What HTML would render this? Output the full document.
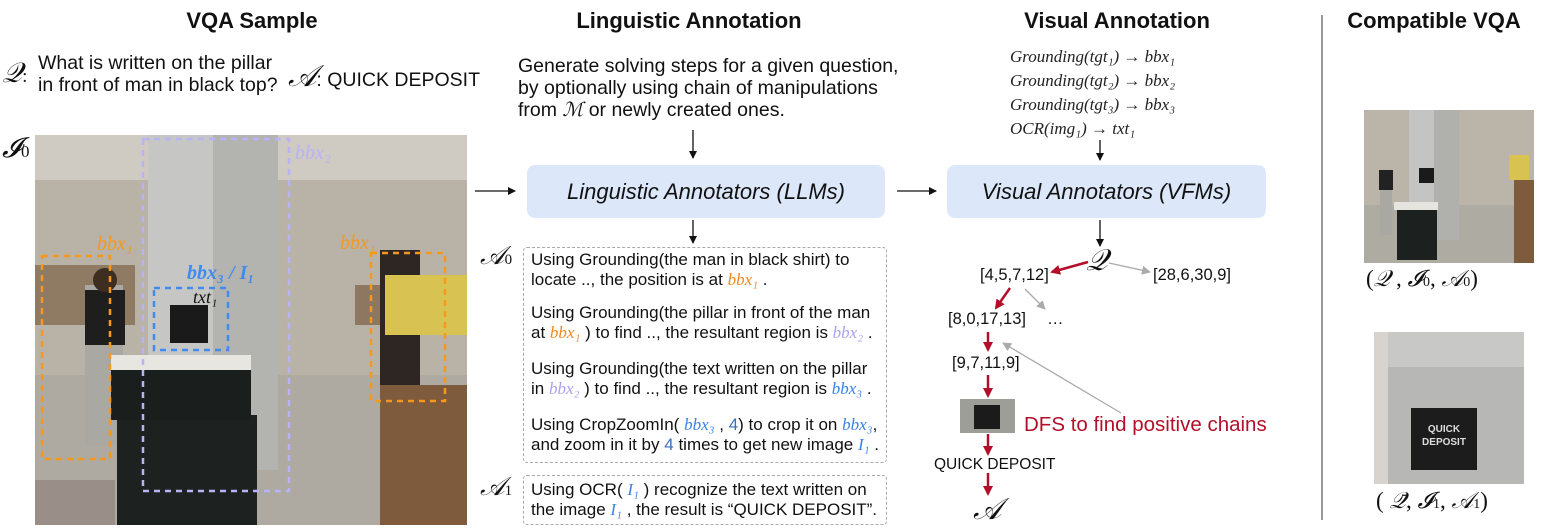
<!DOCTYPE html>
<html><head><meta charset="utf-8"><style>
*{margin:0;padding:0;box-sizing:border-box}
body{width:1544px;height:529px;background:#fff;position:relative;overflow:hidden;font-family:"Liberation Sans",sans-serif;color:#111}
.a{position:absolute;white-space:nowrap}
.t{font-weight:bold;font-size:22px;width:300px;text-align:center;top:8px}
.m{font-family:"Liberation Serif",serif;font-style:italic}
.o{color:#f08a1e}.p{color:#a9a2f0}.b{color:#3b82e6}
.box{position:absolute;background:#dce8fa;border-radius:8px;font-style:italic;font-size:22px;display:flex;align-items:center;justify-content:center}
.dash{position:absolute;border:1px dashed #aaa;border-radius:4px}
.l{font-size:17px;line-height:20px}
.n{font-size:16.5px}
</style></head><body>
<div class="a t" style="left:102px">VQA Sample</div>
<div class="a t" style="left:539px">Linguistic Annotation</div>
<div class="a t" style="left:967px">Visual Annotation</div>
<div class="a t" style="left:1284px">Compatible VQA</div>
<div class="a" style="left:1321px;top:15px;width:2px;height:505px;background:#999"></div>

<div class="a m" style="left:2px;top:58px;font-size:28px">𝒬<span style="font-style:normal;font-size:19px">:</span></div>
<div class="a" style="left:38px;top:52px;font-size:19.5px;line-height:22px">What is written on the pillar<br>in front of man in black top?</div>
<div class="a m" style="left:288px;top:60px;font-size:30px">𝒜<span style="font-style:normal;font-size:19.5px;font-family:'Liberation Sans'">: QUICK DEPOSIT</span></div>
<div class="a m" style="left:2px;top:133px;font-size:28px">𝓘<span style="font-size:17px;font-style:normal">0</span></div>

<svg class="a" style="left:35px;top:135px" width="432" height="390" viewBox="0 0 432 390">
<rect width="432" height="390" fill="#b9b2a6"/>
<rect y="0" width="432" height="45" fill="#cfcac2"/>
<rect y="240" width="432" height="150" fill="#aeaaa2"/>
<rect x="113" y="0" width="130" height="335" fill="#c6c6c4"/>
<rect x="178" y="0" width="65" height="335" fill="#b3b3b0"/>
<rect x="0" y="130" width="100" height="60" fill="#8f7a64"/>
<rect x="320" y="150" width="60" height="40" fill="#8e7760"/>
<rect x="50" y="150" width="38" height="160" fill="#aaa8a2"/>
<rect x="50" y="155" width="40" height="55" fill="#1e1e1e"/>
<circle cx="70" cy="145" r="12" fill="#3e2e22"/>
<rect x="82" y="280" width="140" height="110" fill="#1d211f"/>
<rect x="76" y="225" width="140" height="60" fill="#1a1e1c"/>
<rect x="76" y="220" width="140" height="15" fill="#e8e6e0"/>
<rect x="135" y="170" width="38" height="38" fill="#1a1a1a"/>
<rect x="345" y="115" width="40" height="150" fill="#2d2622"/>
<rect x="350" y="140" width="82" height="60" fill="#d8c252"/>
<rect x="345" y="250" width="87" height="140" fill="#7e5b3c"/>
<rect x="0" y="345" width="80" height="45" fill="#9a8f88"/>
<g fill="none" stroke-dasharray="6 5" stroke-width="2.5">
<rect x="7" y="121" width="68" height="203" stroke="#f6981e"/>
<rect x="336" y="118" width="74" height="148" stroke="#f6981e"/>
<rect x="108" y="4" width="146" height="352" stroke="#b8b2f6"/>
<rect x="119" y="153" width="74" height="62" stroke="#3f8bf0"/>
</g>
<text x="62" y="115" font-family="Liberation Serif" font-style="italic" font-size="20" fill="#f6981e">bbx₁</text>
<text x="305" y="114" font-family="Liberation Serif" font-style="italic" font-size="20" fill="#f6981e">bbx₁</text>
<text x="260" y="24" font-family="Liberation Serif" font-style="italic" font-size="20" fill="#b8b2f6">bbx₂</text>
<text x="152" y="144" font-family="Liberation Serif" font-style="italic" font-weight="bold" font-size="20" fill="#3f8bf0">bbx₃ / I₁</text>
<text x="158" y="168" font-family="Liberation Serif" font-style="italic" font-size="18" fill="#111">txt₁</text>
</svg>

<div class="a" style="left:518px;top:55px;font-size:19.5px;line-height:22px">Generate solving steps for a given question,<br>by optionally using chain of manipulations<br>from <span class="m">ℳ</span> or newly created ones.</div>
<div class="box" style="left:527px;top:165px;width:358px;height:53px">Linguistic Annotators (LLMs)</div>
<div class="box" style="left:947px;top:165px;width:319px;height:53px">Visual Annotators (VFMs)</div>
<div class="a m" style="left:1010px;top:45px;font-size:17px;line-height:24px;color:#222">Grounding(tgt₁) → bbx₁<br>Grounding(tgt₂) → bbx₂<br>Grounding(tgt₃) → bbx₃<br>OCR(img₁) → txt₁</div>

<div class="a m" style="left:480px;top:241px;font-size:26px">𝒜<span style="font-size:15px;font-style:normal">0</span></div>
<div class="a m" style="left:480px;top:472px;font-size:26px">𝒜<span style="font-size:15px;font-style:normal">1</span></div>
<div class="dash" style="left:523px;top:247px;width:364px;height:216px"></div>
<div class="dash" style="left:523px;top:475px;width:364px;height:50px"></div>
<div class="a l" style="left:531px;top:250px">Using Grounding(the man in black shirt) to<br>locate .., the position is at <span class="m o">bbx₁</span> .</div>
<div class="a l" style="left:531px;top:303px">Using Grounding(the pillar in front of the man<br>at <span class="m o">bbx₁</span> ) to find .., the resultant region is <span class="m p">bbx₂</span> .</div>
<div class="a l" style="left:531px;top:359px">Using Grounding(the text written on the pillar<br>in <span class="m p">bbx₂</span> ) to find .., the resultant region is <span class="m b">bbx₃</span> .</div>
<div class="a l" style="left:531px;top:415px">Using CropZoomIn( <span class="m b">bbx₃</span> , <span style="color:#3a6fb0">4</span>) to crop it on <span class="m b">bbx₃</span>,<br>and zoom in it by <span style="color:#3a6fb0">4</span> times to get new image <span class="m b">I₁</span> .</div>
<div class="a l" style="left:531px;top:480px">Using OCR( <span class="m b">I₁</span> )  recognize the text written on<br>the image <span class="m b">I₁</span> , the result is  “QUICK DEPOSIT”.</div>

<div class="a m" style="left:1086px;top:244px;font-size:30px">𝒬</div>
<div class="a n" style="left:980px;top:266px">[4,5,7,12]</div>
<div class="a n" style="left:1153px;top:266px">[28,6,30,9]</div>
<div class="a n" style="left:948px;top:310px">[8,0,17,13]</div>
<div class="a n" style="left:1047px;top:310px">…</div>
<div class="a n" style="left:952px;top:354px">[9,7,11,9]</div>
<svg class="a" style="left:960px;top:399px" width="55" height="34"><rect width="55" height="34" fill="#9e9e98"/><rect x="14" y="6" width="26" height="24" fill="#1b1b1b"/></svg>
<div class="a" style="left:1024px;top:413px;font-size:20.5px;color:#b2102a">DFS to find positive chains</div>
<div class="a" style="left:934px;top:456px;font-size:15.5px">QUICK DEPOSIT</div>
<div class="a m" style="left:973px;top:493px;font-size:30px">𝒜</div>

<svg class="a" style="left:0;top:0" width="1544" height="529">
<defs>
<marker id="k" markerWidth="8" markerHeight="8" refX="7" refY="4" orient="auto" markerUnits="userSpaceOnUse"><path d="M0,0 L8,4 L0,8z" fill="#111"/></marker>
<marker id="r" markerWidth="10" markerHeight="10" refX="8" refY="5" orient="auto" markerUnits="userSpaceOnUse"><path d="M0,0 L10,5 L0,10z" fill="#b2102a"/></marker>
<marker id="g" markerWidth="9" markerHeight="9" refX="8" refY="4.5" orient="auto" markerUnits="userSpaceOnUse"><path d="M0,0 L9,4.5 L0,9z" fill="#aaa"/></marker>
</defs>
<g stroke="#111" stroke-width="1.3" marker-end="url(#k)">
<line x1="475" y1="191" x2="515" y2="191"/>
<line x1="897" y1="191" x2="936" y2="191"/>
<line x1="693" y1="130" x2="693" y2="158"/>
<line x1="693" y1="220" x2="693" y2="243"/>
<line x1="1100" y1="140" x2="1100" y2="160"/>
<line x1="1100" y1="220" x2="1100" y2="246"/>
</g>
<g stroke="#b2102a" stroke-width="2.5" marker-end="url(#r)">
<line x1="1088" y1="262" x2="1052" y2="272"/>
<line x1="1010" y1="288" x2="996" y2="308"/>
<line x1="988" y1="332" x2="988" y2="350"/>
<line x1="988" y1="375" x2="988" y2="396"/>
<line x1="988" y1="434" x2="988" y2="454"/>
<line x1="988" y1="473" x2="988" y2="494"/>
</g>
<g stroke="#aaa" stroke-width="1.3" marker-end="url(#g)">
<line x1="1109" y1="263" x2="1150" y2="272"/>
<line x1="1025" y1="289" x2="1045" y2="309"/>
<line x1="1121" y1="413" x2="1003" y2="343"/>
</g>
</svg>

<svg class="a" style="left:1364px;top:110px" width="170" height="153">
<rect width="170" height="153" fill="#bbb4a8"/><rect y="95" width="170" height="58" fill="#aeaba3"/>
<rect x="45" y="0" width="50" height="130" fill="#c4c4c2"/><rect x="70" y="0" width="25" height="130" fill="#b0b0ad"/>
<rect x="33" y="95" width="40" height="55" fill="#1c201e"/><rect x="30" y="92" width="44" height="8" fill="#e6e4de"/>
<rect x="55" y="58" width="15" height="15" fill="#1a1a1a"/>
<rect x="15" y="60" width="14" height="20" fill="#222"/><rect x="16" y="80" width="12" height="45" fill="#a9a8a2"/>
<rect x="150" y="70" width="20" height="83" fill="#7e5b3c"/><rect x="145" y="45" width="20" height="25" fill="#d8c252"/>
</svg>
<svg class="a" style="left:1374px;top:332px" width="150" height="152">
<rect width="150" height="152" fill="#c8c8c6"/><rect y="35" width="150" height="117" fill="#b7b7b5"/>
<rect width="14" height="152" fill="#d6d4cc"/>
<rect x="37" y="76" width="66" height="62" fill="#1c1c1c"/>
<text x="70" y="100" fill="#ddd" font-size="10" font-weight="bold" text-anchor="middle" font-family="Liberation Sans">QUICK</text>
<text x="70" y="113" fill="#ddd" font-size="10" font-weight="bold" text-anchor="middle" font-family="Liberation Sans">DEPOSIT</text>
</svg>
<div class="a" style="left:1366px;top:266px;font-size:23px;font-family:'Liberation Serif',serif">(<i>𝒬</i> ,  <i>𝓘</i><span style="font-size:14px">0</span>,  <i>𝒜</i><span style="font-size:14px">0</span>)</div>
<div class="a" style="left:1376px;top:488px;font-size:23px;font-family:'Liberation Serif',serif">( <i>𝒬̄</i>,  <i>𝓘</i><span style="font-size:14px">1</span>,  <i>𝒜</i><span style="font-size:14px">1</span>)</div>
</body></html>
